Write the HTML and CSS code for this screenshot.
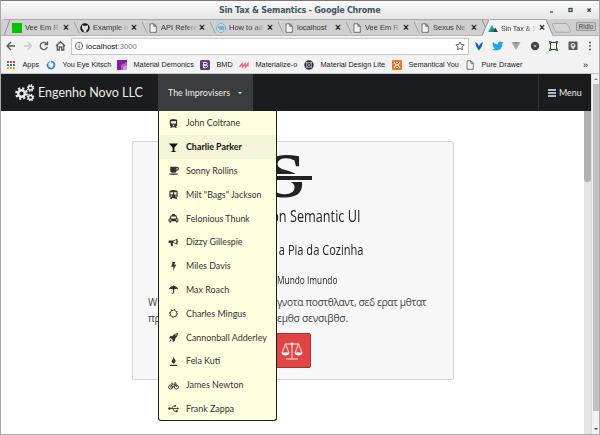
FILE: index.html
```html
<!DOCTYPE html>
<html lang="en">
<head>
<meta charset="utf-8">
<title>Sin Tax &amp; Semantics</title>
<link rel="stylesheet" href="styles.css">
</head>
<body>
<svg class="defs" width="0" height="0">
  <symbol id="page" viewBox="0 0 10 10"><path d="M2 .8h4l2.300 2.300v6.200H2zM5.800.8v2.500h2.500" fill="#f4f4f4" stroke="#555" stroke-width=".8"/></symbol>
  <symbol id="edge" viewBox="0 0 8 17"><path d="M0 .5L7 16.500" fill="none" stroke="#929292"/></symbol>
  <symbol id="cog" viewBox="0 0 12 12"><circle cx="6" cy="6" r="3.100" fill="none" stroke="currentColor" stroke-width="2.300"/><circle cx="6" cy="6" r="4.900" fill="none" stroke="currentColor" stroke-width="2" stroke-dasharray="2 1.850"/></symbol>
</svg>
<div class="window">
  <header class="titlebar"><span class="title">Sin Tax &amp; Semantics - Google Chrome</span>
    <svg class="controls" viewBox="0 0 44 10"><path d="M1 7h3" stroke="#354b53" stroke-width="1.300"/><rect x="20" y="3.500" width="3" height="3" fill="none" stroke="#354b53" stroke-width="1.300"/><path d="M38.500 3.500l3.200 3.200m0-3.200l-3.200 3.200" stroke="#354b53" stroke-width="1.300"/></svg>
  </header>
  <div class="tabs">
    <div class="tab"><svg class="slope first"><path d="M0 16.500L6 .5" stroke="#929292" fill="none"/></svg><svg class="fav" viewBox="0 0 10 10"><path d="M0 0h10v10H0z" fill="#00c000"/></svg><span>Vee Em R</span><b>×</b></div>
    <div class="tab"><svg class="slope"><use href="#edge"/></svg><svg class="fav" viewBox="0 0 10 10"><circle cx="5" cy="5" r="4.700" fill="#181717"/><path d="M3.600 9.500V7.400Q1.600 6.800 2 4.300L2.100 2l1.600.8h2.600L7.900 2 8 4.300q.4 2.500-1.600 3.100v2.100z" fill="#ddd"/></svg><span>Example n</span><b>×</b></div>
    <div class="tab"><svg class="slope"><use href="#edge"/></svg><svg class="fav"><use href="#page"/></svg><span>API Refere</span><b>×</b></div>
    <div class="tab"><svg class="slope"><use href="#edge"/></svg><svg class="fav" viewBox="0 0 10 10"><circle cx="5" cy="5" r="4.400" fill="#c3dbe7" stroke="#4aa9d6" stroke-dasharray="2 .8"/><path d="M2 4h6M3 6h5" stroke="#5a7888"/></svg><span>How to ad</span><b>×</b></div>
    <div class="tab full"><svg class="slope"><use href="#edge"/></svg><svg class="fav"><use href="#page"/></svg><span>localhost</span><b>×</b></div>
    <div class="tab"><svg class="slope"><use href="#edge"/></svg><svg class="fav"><use href="#page"/></svg><span>Vee Em R</span><b>×</b></div>
    <div class="tab"><svg class="slope"><use href="#edge"/></svg><svg class="fav"><use href="#page"/></svg><span>Sexus Ne</span><b>×</b></div>
    <div class="tab active"><svg class="slope"><path d="M0 17L7 0h1v17z" fill="#f2f2f2"/><path d="M0 16.500L7 .5M0 .5l3.500 8" stroke="#929292" fill="none"/></svg><svg class="fav" viewBox="0 0 10 10"><path d="M0 9l4-7 4 7z" fill="#21ad80"/><path d="M4.500 9l2.700-4.500L10 9z" fill="#2c4a5c"/><path d="M2 9l2-4 2 4z" fill="#108775"/></svg><span>Sin Tax &amp; S</span><b>×</b></div>
    <svg class="newtab" viewBox="0 0 30 17"><path d="M0 17V0l7 17z" fill="#f2f2f2"/><path d="M0 .5L7 16.500" stroke="#929292"/><path d="M7 4.500h13q1.500 0 2 1.300l2.500 6q.5 1.500-1 1.500H11q-1.500 0-2-1.300L6.500 6Q6 4.500 7 4.500z" fill="#d4d4d4" stroke="#a2a2a2" stroke-width=".8"/></svg>
    <div class="profile">Ridlo</div>
  </div>
  <div class="toolbar">
    <svg class="navicons" viewBox="0 0 66 18"><g fill="none" stroke="#5a5a5a" stroke-width="1.300"><path d="M15 9H7.500M11 5L7 9l4 4"/><path d="M24 9h7M27.500 5l4 4-4 4" stroke="#c9c9c9"/><path d="M46.500 6.500a3.600 3.600 0 1 0 .800 3.500M47.500 4.500v3h-3"/><path d="M56 9l4.500-4.300L65 9M57.300 8v5h2v-3h2.400v3h2V8"/></g></svg>
    <div class="address"><svg viewBox="0 0 10 10"><circle cx="5" cy="5" r="3.700" fill="none" stroke="#555" stroke-width=".8"/><path d="M5 4.500v2.700M5 2.700v1" stroke="#555"/></svg><span class="host">localhost</span><span class="port">:3000</span>
      <svg class="star" viewBox="0 0 10 10"><path d="M5 .8l1.200 2.700 3 .300L7 5.900l.6 3L5 7.400 2.400 8.900l.6-3L.8 3.800l3-.300z" fill="none" stroke="#555" stroke-width=".9"/></svg></div>
    <svg class="extensions" viewBox="0 0 130 18"><path d="M6 5l2.500 1.500L10 9l1.500-2.500L14 5l-1.500 5-2.500 3.500L7.500 10z" fill="#1765b5"/><path d="M24 5q2 2.500 5 2.200 0-3 2.500-2.700l1.500.700 1.500-.3-1 1.600q0 6.500-6.500 7-2.500 0-4-1.300 2 .1 3-1-1.500-.3-2-1.700h1q-1.700-1-1.500-2.500z" fill="#20a4e8"/><path d="M42.500 5h3l1.500 3 1.500-3h3L47 13z" fill="#a4a4a4"/><path d="M45.500 5h3L47 8z" fill="#777"/><circle cx="66" cy="9" r="4.200" fill="#454545"/><circle cx="66" cy="9" r="1.300" fill="#aaa"/><path d="M81.500 5.500h6v7h-6z" fill="none" stroke="#3a3a3a"/><path d="M80.500 6.500v-2h2M88.500 6.500v-2h-2M80.500 11.500v2h2M88.500 11.500v2h-2" fill="none" stroke="#25951d" stroke-width="1.200"/><rect x="99.500" y="4.500" width="9" height="8.500" rx="1" fill="#555"/><path d="M104 12.500Q100.500 9 102 7q2-2 4 0 1.500 2-2 5.500z" fill="#ddd"/><circle cx="104" cy="8" r="1" fill="#555"/><circle cx="121" cy="5.500" r="1" fill="#555"/><circle cx="121" cy="9" r="1" fill="#555"/><circle cx="121" cy="12.500" r="1" fill="#555"/></svg>
  </div>
  <nav class="bookmarks">
    <a class="bm1"><svg viewBox="0 0 10 10"><path d="M1 2h8" stroke="#d94135" stroke-width="2" stroke-dasharray="2 1"/><path d="M1 5h8" stroke="#3574db" stroke-width="2" stroke-dasharray="2 1"/><path d="M1 8h8" stroke="#eba51a" stroke-width="2" stroke-dasharray="2 1"/><path d="M1 4h2v2H1z" fill="#349850"/></svg><span>Apps</span></a>
    <a class="bm2"><svg viewBox="0 0 10 10"><path d="M5 1.500A3.500 3.500 0 1 1 1.600 4" fill="none" stroke="#2184db" stroke-width="1.700"/><path d="M1.700 4A3.500 3.500 0 0 1 4 1.600" fill="none" stroke="#74bdf2" stroke-width="1.500"/></svg><span>You Eye Kitsch</span></a>
    <a class="bm3"><svg viewBox="0 0 10 10"><path d="M0 0h10v10H0z" fill="#8421a2"/><path d="M4 10V5l6-3v8z" fill="#b259ce"/><path d="M6 10V7l4-2v5z" fill="#d096df"/></svg><span>Material Demonics</span></a>
    <a class="bm4"><svg viewBox="0 0 10 10"><rect width="10" height="10" rx="1.500" fill="#563d7c"/><path d="M3.500 2.300h2q1.600 0 1.600 1.300T5.500 5h-2zM3.500 5h2.300q1.600 0 1.600 1.300T5.800 7.700H3.500z" fill="none" stroke="#fff"/></svg><span>BMD</span></a>
    <a class="bm5"><svg viewBox="0 0 10 10"><path d="M.5 7L3 3.500 3.500 7 6 3.500 6.500 7 9 3.500v3" fill="none" stroke="#ee6c7a" stroke-width="1.400"/></svg><span>Materialize-o</span></a>
    <a class="bm6"><svg viewBox="0 0 10 10"><circle cx="5" cy="5" r="4.700" fill="#263138"/><path d="M2.500 2.500h5v5h-5zm0 0l5 5m0-5l-5 5" fill="none" stroke="#c3c9cc" stroke-width=".7"/></svg><span>Material Design Lite</span></a>
    <a class="bm7"><svg viewBox="0 0 10 10"><rect width="10" height="10" rx="1" fill="#ed7625"/><path d="M2 2l2 3-2 3M8 2L6 5l2 3M3.500 5h3M4 2.500h2M4 7.500h2" fill="none" stroke="#fff"/></svg><span>Semantical You</span></a>
    <a class="bm8"><svg><use href="#page"/></svg><span>Pure Drawer</span></a>
    <i>»</i>
  </nav>
  <div class="viewport">
    <div class="site">
      <nav class="menu">
        <div class="brand"><svg viewBox="0 0 20 18"><use href="#cog" x="0" y="3" width="13" height="13"/><use href="#cog" x="11.500" y="0" width="8" height="8"/><use href="#cog" x="11.500" y="9.500" width="8" height="8"/></svg><span>Engenho Novo LLC</span></div>
        <div class="dropdown"><span>The Improvisers</span><i></i>
          <ul>
            <li><svg viewBox="0 0 12 12"><path d="M2 3q0-2 4-2t4 2v5q0 1-1.500 1.500L10 11H8.500l-1-1h-3l-1 1H2l1.500-1.500Q2 9 2 8zM3.300 3.500V6h5.400V3.500zM6 7.200a.8.8 0 1 0 .1 0" fill-rule="evenodd"/></svg>John Coltrane</li>
            <li class="selected"><svg viewBox="0 0 12 12"><path d="M1 1.500h10L7 6v3.700l2.500 1.300h-7L5 9.700V6z"/></svg>Charlie Parker</li>
            <li><svg viewBox="0 0 12 12"><path d="M2.500 2h7q2.500 0 2.500 2T9.300 6.200Q9.300 8.500 7.500 8.500h-3q-2 0-2-2zM9.300 3.200V5Q10.700 5 10.700 4t-1.400-.8M1 9.300h10q0 1.200-1.500 1.200h-7Q1 10.500 1 9.300" fill-rule="evenodd"/></svg>Sonny Rollins</li>
            <li><svg viewBox="0 0 12 12"><path d="M1.500 3q0-2 4.500-2t4.500 2v5q0 1-1.500 1.500l1 1.500H8.500l-1-1h-3l-1 1H2l1-1.500Q1.500 9 1.500 8zM2.700 3.500V6h2.700V3.500zm3.900 0V6h2.700V3.500zM3.500 7a.7.7 0 1 0 .1 0m5 0a.7.7 0 1 0 .1 0" fill-rule="evenodd"/></svg>Milt "Bags" Jackson</li>
            <li><svg viewBox="0 0 12 12"><path d="M4.500 1h3v1.500H9L10.300 6q1.200.3 1.200 1.500V9h-1v1q-1 1-2 0V9h-5v1q-1 1-2 0V9h-1V7.500Q.5 6.300 1.700 6L3 2.500h1.500zM3.700 3.700L3 6h6l-.7-2.300zM2.500 6.800a.8.8 0 1 0 .1 0m7 0a.8.8 0 1 0 .1 0" fill-rule="evenodd"/></svg>Felonious Thunk</li>
            <li><svg viewBox="0 0 12 12"><path d="M.7 3.700H5q2.500 0 5.300-2.200v2.700q1 .8 0 1.800V8.500Q7.500 6.500 5 6.500l.7 3.500H3.500L2.700 6.500h-2zM6 4.300v1.600q1.500 0 3 .9V3.300q-1.500.9-3 1" fill-rule="evenodd"/></svg>Dizzy Gillespie</li>
            <li><svg viewBox="0 0 12 12"><path d="M5 1h3L6.700 4 9 3.700 5.500 11 6 6 3.500 6.500z"/></svg>Miles Davis</li>
            <li><svg viewBox="0 0 12 12"><path d="M1 6q.8-3.300 4.500-3.700V1.500h1v.8Q10.200 2.700 11 6L9 5.300 6.600 6v3.500q-.3 1.500-1.800 1.200-1-.2-.9-1.200h.8q.8.8.8-.2V6L3 5.300z"/></svg>Max Roach</li>
            <li><svg viewBox="0 0 12 12"><circle cx="6" cy="6" r="3.600" fill="none" stroke="currentColor" stroke-width=".9"/><circle cx="6" cy="6" r="4.400" fill="none" stroke="currentColor" stroke-width="1.200" stroke-dasharray="1 2.450"/></svg>Charles Mingus</li>
            <li><svg viewBox="0 0 12 12"><path d="M11 1Q7.300 1 5 4L2.500 4.500.8 7l2.400-.2 2 2L5 11.200 7.500 9.500 8 7Q11 4.700 11 1M8.700 2.500a.7.7 0 1 1-.1 0M3 8L1 11l3-2z"/></svg>Cannonball Adderley</li>
            <li><svg viewBox="0 0 12 12"><path d="M6.500.8q-.4 1.300 1 2.700 2 2.300-1.200 5-3.300-1.700-2-4 1.800-1.700 2.200-3.700M2 9.500h8V11H2z"/></svg>Fela Kuti</li>
            <li><svg viewBox="0 0 12 12"><g fill="none" stroke="currentColor"><circle cx="2.800" cy="7.700" r="2.200"/><circle cx="9.200" cy="7.700" r="2.200"/><path d="M2.800 7.700L4.500 4.500h3.300L5.700 7.700zM3.500 3.500h2M7 3h1.300l1 4.700"/></g></svg>James Newton</li>
            <li><svg viewBox="0 0 12 12"><circle cx="1.700" cy="6" r="1.400"/><path d="M2 6h9M3.800 6l2-2.800H8M5 6l2 3h2" fill="none" stroke="currentColor" stroke-width=".9"/><circle cx="8" cy="3.200" r="1"/><path d="M8.500 8h2v2h-2zM10 4.500L12 6l-2 1.500z"/></svg>Frank Zappa</li>
          </ul>
        </div>
        <div class="right"><svg viewBox="0 0 8 8"><path d="M0 1h8M0 4h8M0 7h8" stroke="currentColor" stroke-width="1.300"/></svg><span>Menu</span></div>
      </nav>
      <div class="body">
        <main>
          <section class="card">
            <div class="logo"><span>S</span><i></i></div>
            <h1><span>on Semantic UI</span></h1>
            <h2><span>a Pia da Cozinha</span></h2>
            <h3><span>Mundo Imundo</span></h3>
            <div class="copy"><span>W</span><p>γνοτα ποστθλαντ, σεδ ερατ μθτατ</p></div>
            <div class="copy second"><span>πρ</span><p>εμθσ σενσιβθσ.</p></div>
            <button><svg viewBox="0 0 22 20"><g fill="none" stroke="#fff" stroke-width=".9"><path d="M4 3h14M11 1.500v16M5 18h12M4.500 3L1 12h7zM17.500 3L14 12h7z"/><circle cx="11" cy="3" r="1"/></g><path d="M.5 12h8q-1 2.500-4 2.500T.5 12M13.500 12h8q-1 2.500-4 2.500t-4-2.500" fill="#fff"/></svg></button>
          </section>
        </main>
        <div class="innerbar"><i></i></div>
      </div>
    </div>
    <div class="outerbar"><b class="up"></b><i></i><b class="down"></b></div>
  </div>
</div>
</body>
</html>
```

FILE: styles.css
```css
* { box-sizing: border-box; }
body { margin: 0; width: 600px; height: 435px; overflow: hidden; font-family: "Liberation Sans", sans-serif; }
svg { display: block; flex: none; overflow: visible; }
.defs { position: absolute; }
.window { width: 600px; height: 435px; border: 1px solid #aaa; border-top-color: #777; display: flex; flex-direction: column; background: #fff; }
.titlebar { height: 18px; flex: none; display: flex; align-items: center; justify-content: flex-end; background: linear-gradient(#fafafa, #e6e6e6); }
.title { flex: 1; padding-left: 218px; font: bold 8px "DejaVu Sans", sans-serif; color: #40565e; letter-spacing: -.22px; white-space: nowrap; }
.controls { width: 44px; height: 10px; margin-right: 6px; }
.tabs { height: 17px; flex: none; display: flex; background: #cfcfcf; border-bottom: 1px solid #b5b5b5; padding-left: 3px; }
.tab { width: 68px; flex: none; display: flex; align-items: center; font-size: 7.500px; color: #333; border-top: 1px solid #aaa; }
.slope { width: 6px; height: 17px; margin-top: -1px; }
.tab:first-child { width: 70px; }
.tab.active { background: linear-gradient(90deg, transparent 8px, #f2f2f2 8px); height: 17px; width: 64px; }
.fav { width: 10px; height: 10px; }
.tab span { width: 38px; height: 11px; line-height: 11px; margin-left: 3px; white-space: nowrap; -webkit-mask-image: linear-gradient(90deg, #000 65%, transparent 95%); }
.tab.full span { -webkit-mask-image: none; }
.tab:first-child .fav { margin-left: 2px; }
.tab b { font: bold 10px/10px "Liberation Sans", sans-serif; color: #222; }
.tab.active span { width: 38px; font-size: 7.200px; letter-spacing: -.1px; }
.newtab { width: 30px; height: 17px; }
.profile { margin: 3px 0 0 auto; width: 21px; height: 9px; margin-right: 3px; border: 1px solid #999; background: #c5c5c5; border-radius: 1px; font-size: 6.500px; line-height: 7px; text-align: center; color: #444; }
.toolbar { height: 20px; flex: none; background: #f2f2f2; display: flex; align-items: center; }
.navicons { width: 66px; height: 18px; margin-left: -1px; }
.address { flex: none; margin-left: 5px; width: 398px; height: 17px; border: 1px solid #c7c7c7; background: #fff; display: flex; align-items: center; font-size: 8px; padding-left: 2px; }
.address svg { width: 10px; height: 10px; }
.host { margin-left: 2px; color: #111; }
.port { color: #777; font-size: 7.700px; }
.address .star { margin-left: auto; margin-right: 3px; }
.extensions { width: 130px; height: 18px; }
.bookmarks { height: 18px; flex: none; background: #f2f2f2; border-bottom: 1px solid #c5c5c5; display: flex; align-items: center; font-size: 7.300px; color: #222; white-space: nowrap; padding-left: 5px; }
.bookmarks a { display: flex; align-items: center; flex: none; }
.bookmarks svg { width: 10px; height: 10px; }
.bookmarks span { margin-left: 6.500px; }
.bm1 { width: 40px; } .bm2 { width: 71px; } .bm3 { width: 83px; } .bm4 { width: 39px; }
.bm5 { width: 65px; } .bm6 { width: 88px; } .bm7 { width: 73px; } .bm8 { width: 118px; }
.bookmarks i { font-style: normal; font-size: 9px; }
.viewport { flex: 1; min-height: 0; display: flex; }
.site { width: 590px; display: flex; flex-direction: column; }
.menu { height: 37px; flex: none; background: #1b1c1d; display: flex; font-family: Lato, sans-serif; color: #eee; font-size: 8.900px; }
.brand { width: 157px; display: flex; align-items: center; padding-left: 14px; font-size: 12.500px; white-space: nowrap; }
.brand svg { width: 20px; height: 18px; margin-right: 3px; }
.dropdown { width: 95px; background: #3b3c3d; position: relative; display: flex; align-items: center; padding-left: 10px; white-space: nowrap; }
.dropdown > i { margin-left: 8px; border: 2.500px solid transparent; border-top-color: #eee; border-bottom: 0; }
.dropdown ul { position: absolute; left: 0; top: 37px; width: 119px; height: 310px; margin: 0; padding: 0; list-style: none; border: 1px solid #1b1c1d; border-top: 0; border-radius: 0 0 3px 3px; background: #ffffe0; color: #333; z-index: 2; overflow: hidden; }
.dropdown li { height: 23.800px; display: flex; align-items: center; padding-left: 9px; font-size: 8.900px; }
.dropdown li svg { width: 11px; height: 11px; margin-right: 7px; fill: currentColor; margin-top: 1px; }
.dropdown li.selected { background: #f5f5d9; color: #111; font-weight: bold; }
.right { margin-left: auto; width: 53px; border-left: 1px solid #333; display: flex; align-items: center; padding-left: 9px; }
.right svg { width: 8px; height: 8px; margin-right: 3px; }
.body { flex: 1; display: flex; }
main { flex: 1; padding: 30px 0 0 131px; }
.innerbar { width: 7px; background: #e5e5e5; }
.innerbar i { display: block; height: 71px; background: #b1b1b1; border-radius: 0 0 3px 3px; }
.outerbar { width: 8px; background: #f1f1f1; border-left: 1px solid #ddd; display: flex; flex-direction: column; align-items: center; padding: 4px 0; }
.outerbar i { flex: 1; width: 6px; margin: 4px 0 17px; background: #c1c1c1; }
.outerbar b { border: 2px solid transparent; }
.outerbar .up { border-bottom-color: #888; border-top: 0; }
.outerbar .down { border-top-color: #444; border-bottom: 0; }
.card { width: 322px; height: 239px; background: #f7f7f7; border: 1px solid #d4d4d5; border-radius: 2px; padding: 0 15px; color: #222; }
.logo { height: 64px; position: relative; padding-left: 118px; font: bold 64px/68px "Liberation Serif", serif; color: #222; }
.logo i { position: absolute; left: 106px; top: 32px; width: 58px; height: 8px; background: #222; border: solid #f7f7f7; border-width: 2px 0; }
.logo span { display: block; transform: scaleX(1.100); transform-origin: 0 0; }
h1, h2, h3 { margin: 0; font-family: "Open Sans", sans-serif; font-weight: 400; text-align: right; white-space: nowrap; }
h1 span, h2 span, h3 span { display: inline-block; transform: scaleX(.78); transform-origin: right; }
h1 { font-size: 16.300px; line-height: 22px; padding-right: 77px; margin-top: -1px; }
h2 { font-size: 14.200px; line-height: 20px; padding-right: 75px; margin-top: 13px; }
h3 { font-size: 10.700px; line-height: 14px; padding-right: 101px; margin-top: 13px; }
.copy { display: flex; font: 10.200px/15.500px "Open Sans", sans-serif; letter-spacing: -.360px; color: #444; margin-top: 8px; }
.copy span { width: 129px; }
.copy p { margin: 0; white-space: nowrap; }
.copy.second { margin-top: 0; letter-spacing: -.200px; }
button { display: flex; align-items: center; justify-content: center; width: 39px; height: 35px; margin: 7px 0 0 124px; padding: 0; background: #e04444; border: 1px solid #a03535; border-radius: 2px; }
button svg { width: 22px; height: 20px; }
```
